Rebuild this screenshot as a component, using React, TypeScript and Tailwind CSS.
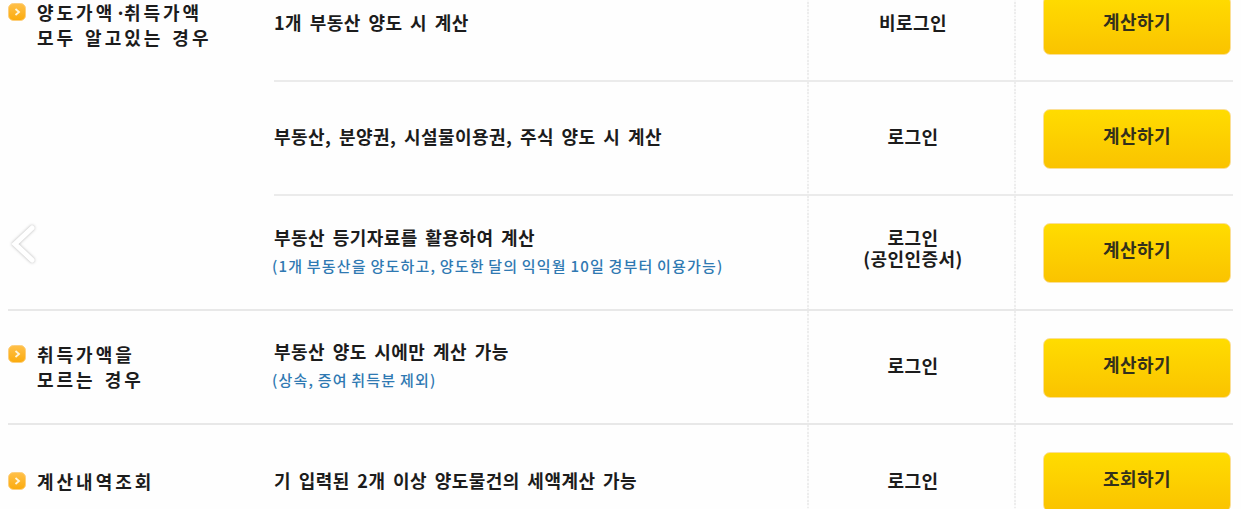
import type { ReactNode } from 'react';

type Row = {
  title: string;
  note?: string;
  access: string[];
  action: string;
  height: string;
};

type Group = {
  id: string;
  label: ReactNode;
  padding: string;
  rows: Row[];
};

const groups: Group[] = [
  {
    id: 'known',
    label: (
      <>
        <p>양도가액<span className="tracking-[-2px]">·</span>취득가액</p>
        <p>모두 알고있는 경우</p>
      </>
    ),
    padding: 'pt-[34px]',
    rows: [
      { title: '1개 부동산 양도 시 계산', access: ['비로그인'], action: '계산하기', height: 'h-[114px]' },
      { title: '부동산, 분양권, 시설물이용권, 주식 양도 시 계산', access: ['로그인'], action: '계산하기', height: 'h-[114px]' },
      {
        title: '부동산 등기자료를 활용하여 계산',
        note: '(1개 부동산을 양도하고, 양도한 달의 익익월 10일 경부터 이용가능)',
        access: ['로그인', '(공인인증서)'],
        action: '계산하기',
        height: 'h-[113px]',
      },
    ],
  },
  {
    id: 'unknown',
    label: (
      <>
        <p>취득가액을</p>
        <p>모르는 경우</p>
      </>
    ),
    padding: 'pt-[33px]',
    rows: [
      { title: '부동산 양도 시에만 계산 가능', note: '(상속, 증여 취득분 제외)', access: ['로그인'], action: '계산하기', height: 'h-[112px]' },
    ],
  },
  {
    id: 'history',
    label: <p>계산내역조회</p>,
    padding: 'pt-[46px]',
    rows: [
      { title: '기 입력된 2개 이상 양도물건의 세액계산 가능', access: ['로그인'], action: '조회하기', height: 'h-[114px]' },
    ],
  },
];

function Bullet() {
  return (
    <svg className="mt-px h-[18px] w-[18px] shrink-0" viewBox="0 0 18 18" fill="none">
      <defs>
        <linearGradient id="bullet" x1="0" y1="0" x2="0" y2="1">
          <stop offset="0" stopColor="#ffc04a" />
          <stop offset="1" stopColor="#fbab0c" />
        </linearGradient>
      </defs>
      <rect x="0.5" y="0.5" width="17" height="17" rx="5" fill="url(#bullet)" stroke="#fdcf7d" />
      <path d="M7.5 6l3.5 3-3.5 3" stroke="#fff6dc" strokeWidth="1.8" />
    </svg>
  );
}

function DottedCell({ className, children }: { className: string; children: ReactNode }) {
  return (
    <div className={`flex shrink-0 ${className}`}>
      <div className="w-[2px] shrink-0 bg-[repeating-linear-gradient(to_bottom,#ededed_0px,#ededed_1.7px,#fafafa_1.7px,#fafafa_3.4px)]" />
      {children}
    </div>
  );
}

function TableRow({ row, line }: { row: Row; line: boolean }) {
  return (
    <div className={`flex ${row.height} ${line ? 'border-b-2 border-[#ebebeb]' : ''}`}>
      <div className="flex flex-1 flex-col justify-center pb-[4px] whitespace-nowrap">
        <p className="text-[18px] leading-[26px] font-bold tracking-[0.45px] [word-spacing:3.1px]">{row.title}</p>
        {row.note && (
          <p className="-ml-0.5 pt-[4px] text-[15px] leading-6 font-medium tracking-[1.2px] text-[#2f79b2] [word-spacing:-1px]">
            {row.note}
          </p>
        )}
      </div>
      <DottedCell className="w-[207px]">
        <div
          className={`flex flex-1 flex-col justify-center pl-[3px] text-center text-[18px] leading-[21px] font-bold tracking-[0.45px] ${row.access.length > 1 ? 'pb-[9px]' : 'pb-1'}`}
        >
          {row.access.map((text) => (
            <p key={text}>{text}</p>
          ))}
        </div>
      </DottedCell>
      <DottedCell className="w-[219px]">
        <button className="mt-[27px] ml-[27px] h-[60px] w-[188px] rounded-[7px] border border-[#fbdf96] bg-linear-to-b from-[#ffdc00] to-[#fac300] pb-[7px] text-[18px] font-bold tracking-[0.45px] text-[#33301c]">
          {row.action}
        </button>
      </DottedCell>
    </div>
  );
}

export default function App() {
  return (
    <main className="relative h-[509px] w-[1241px] overflow-hidden bg-[#fefefe] pr-2 pl-2 font-['Noto_Sans_CJK_KR',sans-serif] text-[#1c1c1c]">
      <div className="-mt-8">
        {groups.map((group, i) => (
          <section
            key={group.id}
            className={`flex ${i < groups.length - 1 ? 'border-b-2 border-[#e8e8e8]' : ''}`}
          >
            <div className={`flex w-[266px] shrink-0 gap-[11px] ${group.padding}`}>
              <Bullet />
              <div className="-mt-[2px] text-[18px] leading-[25px] font-bold tracking-[3px] whitespace-nowrap [word-spacing:1.9px]">
                {group.label}
              </div>
            </div>
            <div className="flex-1">
              {group.rows.map((row, j) => (
                <TableRow key={row.title} row={row} line={j < group.rows.length - 1} />
              ))}
            </div>
          </section>
        ))}
      </div>

      {/* previous-slide arrow floating over the table */}
      <button className="absolute top-[220px] left-[6px]" aria-label="이전">
        <svg width="36" height="48" viewBox="0 0 36 48" fill="none" className="drop-shadow-[0_0_1.5px_rgba(0,0,0,0.3)]">
          <path d="M26 8L9 24l17 16" stroke="#fff" strokeWidth="5" strokeLinecap="round" />
        </svg>
      </button>
    </main>
  );
}
